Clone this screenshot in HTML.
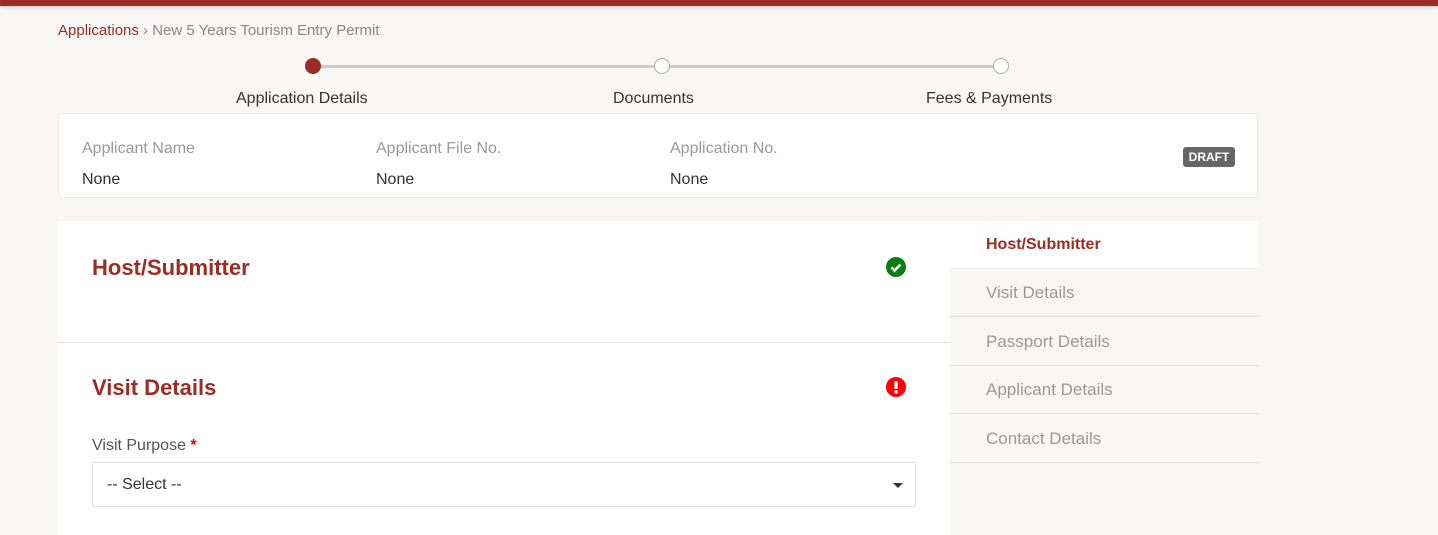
<!DOCTYPE html>
<html><head><style>
body{margin:0;width:1438px;height:535px;overflow:hidden;background:#f8f7f5;font-family:"Liberation Sans",sans-serif;position:relative}
.a{position:absolute;white-space:nowrap}
.top{left:0;top:0;width:1438px;height:6px;background:#9b2d24;box-shadow:0 1px 4px rgba(0,0,0,.2)}
.lbl{color:#999;font-size:16px}
.val{color:#333;font-size:16px}
.nav{left:950px;width:308px;height:48px;border-bottom:1px solid #e2e0dd;color:#999;font-size:17px;line-height:48px;padding-left:36px;box-sizing:border-box}
</style></head><body>
<div class="a top"></div>
<div class="a" style="left:58px;top:22px;font-size:15px;color:#888"><span style="color:#9b2d24">Applications</span> &rsaquo; New 5 Years Tourism Entry Permit</div>
<div class="a" style="left:313px;top:65px;width:688px;height:3px;background:#ccc"></div>
<div class="a" style="left:305px;top:58px;width:16px;height:16px;border-radius:50%;background:#9b2d24"></div>
<div class="a" style="left:654px;top:58px;width:14px;height:14px;border-radius:50%;background:#fff;border:1px solid #aaa"></div>
<div class="a" style="left:993px;top:58px;width:14px;height:14px;border-radius:50%;background:#fff;border:1px solid #aaa"></div>
<div class="a" style="left:236px;top:90px;font-size:16px;color:#333">Application Details</div>
<div class="a" style="left:613px;top:90px;font-size:16px;color:#333">Documents</div>
<div class="a" style="left:926px;top:90px;font-size:16px;color:#333">Fees &amp; Payments</div>
<div class="a" style="left:58px;top:113px;width:1200px;height:85px;background:#fff;border:1px solid #ebe9e6;border-radius:4px;box-sizing:border-box"></div>
<div class="a lbl" style="left:82px;top:140px">Applicant Name</div>
<div class="a lbl" style="left:376px;top:140px">Applicant File No.</div>
<div class="a lbl" style="left:670px;top:140px">Application No.</div>
<div class="a val" style="left:82px;top:171px">None</div>
<div class="a val" style="left:376px;top:171px">None</div>
<div class="a val" style="left:670px;top:171px">None</div>
<div class="a" style="left:1183px;top:147px;width:52px;height:20px;background:#666;border-radius:3px;color:#fff;font-size:12px;font-weight:bold;text-align:center;line-height:20px">DRAFT</div>
<div class="a" style="left:58px;top:221px;width:892px;height:314px;background:#fff"></div>
<div class="a" style="left:58px;top:342px;width:892px;height:1px;background:#e2e0dd"></div>
<div class="a" style="left:92px;top:255px;font-size:22px;font-weight:bold;color:#9b2d24">Host/Submitter</div>
<svg class="a" style="left:886px;top:257px" width="20" height="20" viewBox="0 0 20 20"><circle cx="10" cy="10" r="10" fill="#0a7d14"/><path d="M5.5 10.5l3 3 6-6" stroke="#fff" stroke-width="2.6" fill="none"/></svg>
<div class="a" style="left:92px;top:375px;font-size:22px;font-weight:bold;color:#9b2d24">Visit Details</div>
<svg class="a" style="left:886px;top:377px" width="20" height="20" viewBox="0 0 20 20"><circle cx="10" cy="10" r="10" fill="#f00"/><rect x="8.3" y="4" width="3.4" height="8" rx="1" fill="#fff"/><circle cx="10" cy="15" r="1.8" fill="#fff"/></svg>
<div class="a" style="left:92px;top:437px;font-size:16px;color:#555">Visit Purpose<span style="color:#d00;font-weight:bold"> *</span></div>
<div class="a" style="left:92px;top:462px;width:824px;height:45px;border:1px solid #ddd;border-radius:2px;box-sizing:border-box;background:#fff"></div>
<div class="a" style="left:107px;top:476px;font-size:16px;color:#333">-- Select --</div>
<div class="a" style="left:893px;top:483px;width:0;height:0;border-left:5px solid transparent;border-right:5px solid transparent;border-top:5px solid #333"></div>
<div class="a nav" style="top:221px;background:#fff;color:#9b2d24;font-weight:bold;font-size:16px;border-bottom:1px solid #eee">Host/Submitter</div>
<div class="a nav" style="top:269px">Visit Details</div>
<div class="a nav" style="top:318px">Passport Details</div>
<div class="a nav" style="top:366px">Applicant Details</div>
<div class="a nav" style="top:415px">Contact Details</div>
</body></html>
